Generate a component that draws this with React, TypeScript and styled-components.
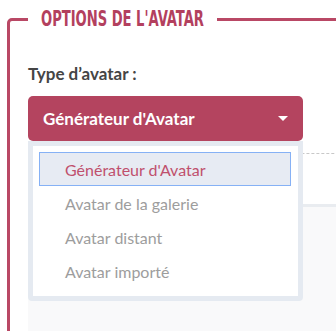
import React, { useLayoutEffect, useRef, useState } from "react"
import styled, { createGlobalStyle } from "styled-components"

const GlobalStyle = createGlobalStyle`
  html, body {
    margin: 0;
    padding: 0;
    background: #ffffff;
    overflow: hidden;
  }
  body {
    font-family: Lato, "Open Sans", sans-serif;
  }
`

const Page = styled.div`
  width: 336px;
  height: 331px;
  padding: 8px 0 0 7px;
  box-sizing: border-box;
  overflow: hidden;
`

const Frame = styled.fieldset`
  margin: 0;
  width: 380px;
  height: 400px;
  box-sizing: border-box;
  border: 3px solid #b94865;
  border-radius: 5px;
  padding: 0 0 0 18px;
  min-width: 0;
`

const Legend = styled.legend`
  padding: 0 13px;
  margin-left: 0;
  line-height: 22px;
`

const LegendBox = styled.span`
  display: inline-block;
  width: 163px;
  height: 22px;
  vertical-align: top;
  overflow: visible;
  white-space: nowrap;
`

const LegendText = styled.span`
  display: inline-block;
  font-family: "Liberation Sans Narrow", "DejaVu Sans Condensed", sans-serif;
  font-stretch: condensed;
  font-weight: 700;
  font-size: 22px;
  line-height: 22px;
  color: #b3405e;
  transform-origin: left center;
`

const Label = styled.div`
  margin-top: 34px;
  font-size: 17px;
  line-height: 20px;
  font-weight: 700;
  color: #454545;
`

const SelectWrap = styled.div`
  position: relative;
  width: 275px;
  margin-top: 12px;
`

const SelectButton = styled.div`
  display: flex;
  align-items: center;
  justify-content: space-between;
  height: 45px;
  padding: 0 15px 0 15px;
  box-sizing: border-box;
  background: #b4445f;
  border-radius: 5px;
  color: #ffffff;
  font-size: 17px;
  font-weight: 700;
`

const Caret = styled.span`
  width: 0;
  height: 0;
  border-left: 5px solid transparent;
  border-right: 5px solid transparent;
  border-top: 5px solid #ffffff;
`

const Menu = styled.ul`
  position: absolute;
  top: 45px;
  left: 0;
  z-index: 2;
  width: 275px;
  box-sizing: border-box;
  margin: 0;
  list-style: none;
  background: #ffffff;
  border: 5px solid #e5eaf1;
  border-radius: 0 0 4px 4px;
  padding: 6px 7px 8px 6px;
`

const Item = styled.li<{ $active?: boolean }>`
  height: 34px;
  box-sizing: border-box;
  display: flex;
  align-items: center;
  padding-left: 25px;
  font-size: 16px;
  color: ${(p) => (p.$active ? "#c0506d" : "#9d9d9d")};
  background: ${(p) => (p.$active ? "#e7ebf3" : "transparent")};
  border: 1px solid ${(p) => (p.$active ? "#86b1f5" : "transparent")};
`

const DashedRule = styled.div`
  margin-top: 12px;
  border-top: 1px dashed #c8c8c8;
`

const Panel = styled.div`
  margin-top: 50px;
  height: 200px;
  border-top: 3px solid #e9ecf0;
  background: #f9f9fa;
`

const options = [
  "Générateur d'Avatar",
  "Avatar de la galerie",
  "Avatar distant",
  "Avatar importé",
]

export default function App() {
  const textRef = useRef<HTMLSpanElement>(null)
  const [scale, setScale] = useState(1)

  useLayoutEffect(() => {
    if (textRef.current) {
      const w = textRef.current.offsetWidth
      if (w > 0) setScale(163 / w)
    }
  }, [])

  return (
    <>
      <GlobalStyle />
      <Page>
        <Frame>
          <Legend>
            <LegendBox>
              <LegendText ref={textRef} style={{ transform: `scaleX(${scale})` }}>
                OPTIONS DE L'AVATAR
              </LegendText>
            </LegendBox>
          </Legend>
          <Label>Type d’avatar :</Label>
          <SelectWrap>
            <SelectButton>
              Générateur d'Avatar
              <Caret />
            </SelectButton>
            <Menu>
              {options.map((o, i) => (
                <Item key={o} $active={i === 0}>
                  {o}
                </Item>
              ))}
            </Menu>
          </SelectWrap>
          <DashedRule />
          <Panel />
        </Frame>
      </Page>
    </>
  )
}
